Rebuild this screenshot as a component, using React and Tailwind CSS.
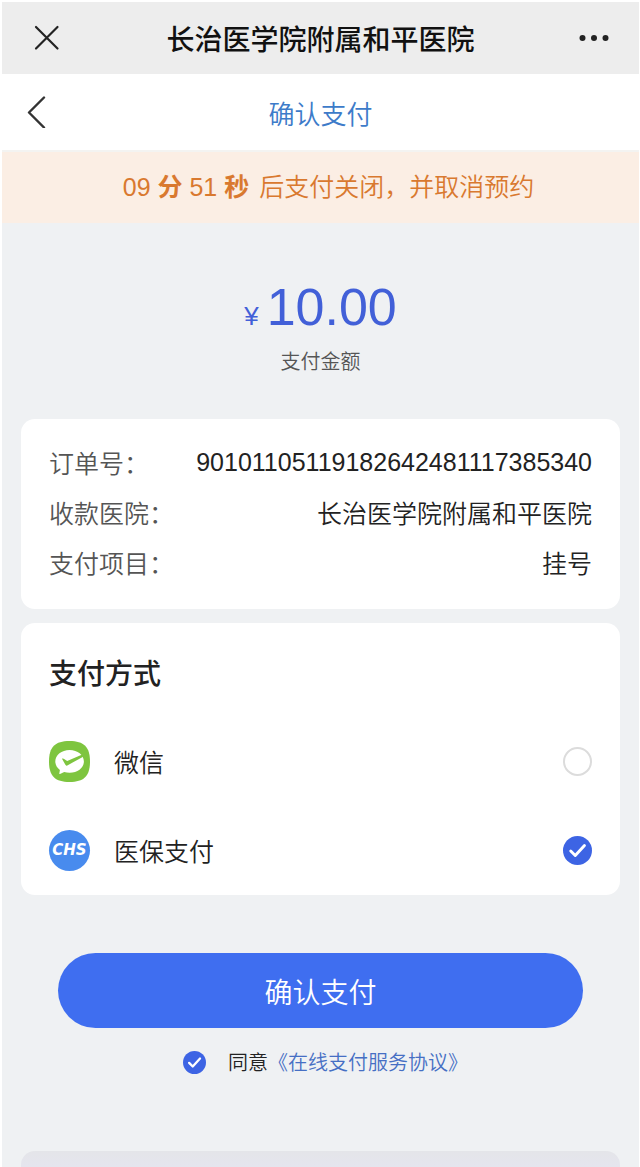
import { useState } from 'react'

const ORDER_ROWS = [
  { label: '订单号：',   value: '90101105119182642481117385340', numeric: true },
  { label: '收款医院：', value: '长治医学院附属和平医院' },
  { label: '支付项目：', value: '挂号' },
]

const METHODS = [
  { id: 'wechat', label: '微信',     Icon: WechatPayIcon },
  { id: 'chs',    label: '医保支付', Icon: ChsIcon },
]

function WechatPayIcon() {
  return (
    <svg className="size-[41px]" viewBox="0 0 41 41" aria-hidden="true">
      <path d="M20.500 0C35 0 41 6 41 20.500S35 41 20.500 41 0 35 0 20.500 6 0 20.500 0Z" fill="#7ec53f" />
      <path
        d="M20.600 9c-8 0-14.300 5.100-14.300 11.500 0 3.400 1.800 6.300 4.600 8.400l-.6 3.600c0 .5.3.7.7.5l4.200-2c1.700.5 3.500.8 5.400.8 8 0 14.300-5 14.300-11.300 0-6.400-6.300-11.500-14.300-11.500Z"
        fill="#fff"
      />
      <path d="M13 17.800c.8-.6 1.500-.3 2.100.1l3.100 2.200 14.500-6.300 1.500 2-15.900 8.600c-.9.5-1.500.2-1.900-.6Z" fill="#7ec53f" />
    </svg>
  )
}

function ChsIcon() {
  return (
    <span className="flex size-[41px] items-center justify-center rounded-full bg-[#488bee] font-['DejaVu_Sans',sans-serif] text-[15px] font-bold italic text-white">
      CHS
    </span>
  )
}

function Tick({ className }) {
  return (
    <svg className={`pointer-events-none invisible col-start-1 row-start-1 peer-checked:visible ${className}`} viewBox="0 0 30 30" fill="none" aria-hidden="true">
      <path d="M8 15.500l4.700 4.700L22.200 9.800" stroke="#fff" strokeWidth="3" strokeLinecap="round" strokeLinejoin="round" />
    </svg>
  )
}

export default function App() {
  const [method, setMethod] = useState('chs')
  const [agreed, setAgreed] = useState(true)

  return (
    <div className="flex min-h-screen flex-col border-t-2 border-r border-l-2 border-white bg-[#eff1f3] font-['Noto_Sans_CJK_SC',sans-serif] font-[350] text-[#222]">
      <header className="flex h-18 items-center justify-between bg-[#ededed] px-[30px]">
        <button type="button" aria-label="关闭" className="w-[30px]">
          <svg className="size-[30px]" viewBox="0 0 30 30" fill="none" stroke="#222" strokeWidth="2.200" strokeLinecap="round" aria-hidden="true">
            <path d="M4 4l21.500 21.500M25.500 4L4 25.500" />
          </svg>
        </button>
        <h1 className="text-[28px] font-medium text-[#111]">长治医学院附属和平医院</h1>
        <button type="button" aria-label="更多" className="w-[30px]">
          <svg className="size-[30px]" viewBox="0 0 30 30" fill="#222" aria-hidden="true">
            <circle cx="3.500" cy="15" r="3" />
            <circle cx="15" cy="15" r="3" />
            <circle cx="26.500" cy="15" r="3" />
          </svg>
        </button>
      </header>

      <div className="flex h-[78px] items-center justify-between border-b-2 border-[#f3f3f1] bg-white px-6">
        <button type="button" aria-label="返回">
          <svg className="h-8 w-5" viewBox="0 0 20 32" fill="none" stroke="#333" strokeWidth="2.400" strokeLinecap="round" strokeLinejoin="round" aria-hidden="true">
            <path d="M18 1.500L3 16.500l15 15" />
          </svg>
        </button>
        <h2 className="text-[26px] font-[350] text-[#3d7bc9]">确认支付</h2>
        <span className="w-5" />
      </div>

      <p className="flex h-[71px] items-center justify-center bg-[#fbeee4] pl-4 font-['Liberation_Sans','Noto_Sans_CJK_SC',sans-serif] text-[25px] text-[#d9792f]">
        <span>09 <b>分</b> 51 <b>秒</b></span>
        <span className="ml-2.5">后支付关闭，并取消预约</span>
      </p>

      <div className="flex h-[196px] flex-col items-center pt-12">
        <div className="flex items-baseline gap-2 font-['Liberation_Sans',sans-serif] text-[#4260d8]">
          <span className="text-[26px]">¥</span>
          <span className="text-[52px] leading-[72px]">10.00</span>
        </div>
        <p className="mt-1 text-xl text-[#555]">支付金额</p>
      </div>

      <main className="flex flex-col px-[19px]">
        <dl className="rounded-[14px] bg-white px-7 pt-[18px] pb-[22px] text-[25px] leading-[50px]">
          {ORDER_ROWS.map(r => (
            <div key={r.label} className="flex justify-between">
              <dt className="text-[#555]">{r.label}</dt>
              <dd className={r.numeric ? "font-['Liberation_Sans',sans-serif]" : ''}>{r.value}</dd>
            </div>
          ))}
        </dl>

        <fieldset className="mt-3.5 rounded-[14px] bg-white px-7 pt-7">
          <legend className="float-left w-full text-[28px] leading-[42px] font-medium">支付方式</legend>
          <div className="clear-both pt-6">
            {METHODS.map(({ id, label, Icon }) => (
              <label key={id} className="flex h-[89px] items-center text-[25px]">
                <Icon />
                <span className="ml-6 flex-1">{label}</span>
                <span className="grid">
                  <input
                    type="radio"
                    name="method"
                    value={id}
                    checked={method === id}
                    onChange={() => setMethod(id)}
                    className="peer col-start-1 row-start-1 size-[29px] appearance-none rounded-full border-2 border-[#dcdcdc] checked:border-0 checked:bg-[#3d64e4]"
                  />
                  <Tick className="size-[29px]" />
                </span>
              </label>
            ))}
          </div>
        </fieldset>

        <button type="button" className="mx-[37px] mt-[58px] h-[75px] rounded-full bg-[#3f6ef0] text-[28px] text-white">
          确认支付
        </button>

        <div className="mt-5 flex items-center justify-center pl-2.5 text-xl">
          <label className="flex items-center">
            <span className="grid">
              <input
                type="checkbox"
                checked={agreed}
                onChange={e => setAgreed(e.target.checked)}
                className="peer col-start-1 row-start-1 size-[23px] appearance-none rounded-full border border-[#ccc] checked:border-0 checked:bg-[#3d64e4]"
              />
              <Tick className="size-[23px]" />
            </span>
            <span className="ml-[22px]">同意</span>
          </label>
          <a href="#agreement" className="text-[#466fc4]">《在线支付服务协议》</a>
        </div>
      </main>

      <div className="mt-auto px-[19px]">
        <div className="h-4 rounded-t-[14px] bg-linear-to-b from-[#e4e5e9] to-[#e5e5ee]" />
      </div>
    </div>
  )
}
